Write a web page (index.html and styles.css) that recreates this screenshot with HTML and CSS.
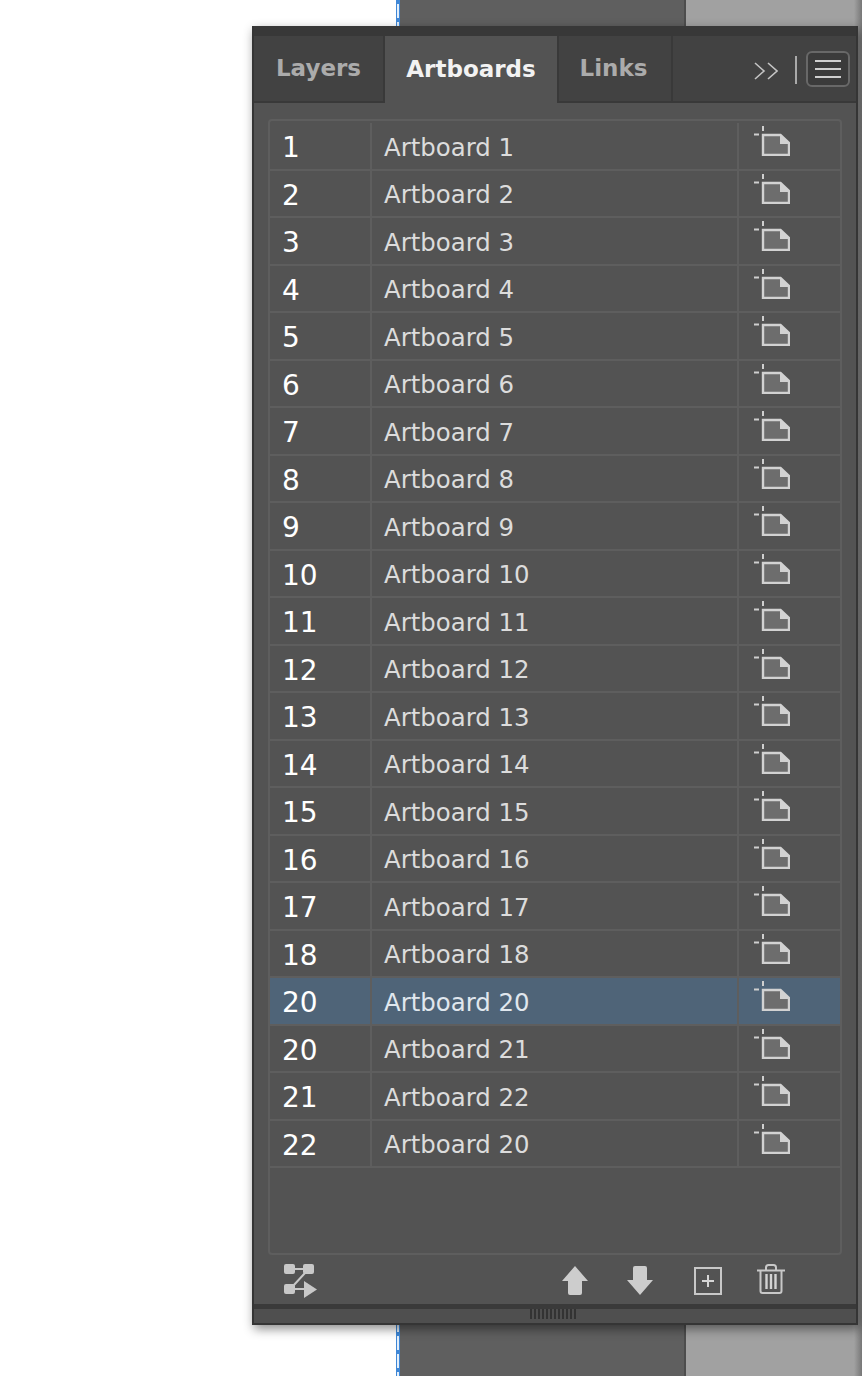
FILE: index.html
```html
<!DOCTYPE html>
<html lang="en">
<head>
  <meta charset="UTF-8" />
  <title>Artboards</title>
  <link rel="stylesheet" href="styles.css">
</head>
<body>
  <svg class="sprites" width="0" height="0">
    <!-- artboard icon used in every row -->
    <symbol id="artboard" viewBox="0 0 36 30">
      <path d="M0 8.500h5M9 0v5" fill="none" stroke="#cfcfcf" stroke-width="2"/>
      <path d="M9 9h17.500l8.500 8v12H9z" fill="#6d6d6d" stroke="#d2d2d2" stroke-width="2.400"/>
      <path d="M26 8l10 10H26z" fill="#d2d2d2"/>
    </symbol>
  </svg>

  <!-- Canvas behind the panel -->
  <div class="canvas">
    <div class="canvas-white"></div>
    <div class="canvas-guide"></div>
    <div class="canvas-dark"></div>
    <div class="canvas-light"></div>
    <div class="canvas-edge"></div>
  </div>

  <!-- Artboards panel -->
  <div class="panel">
    <div class="panel-top"></div>
    <div class="tab-bar">
      <div class="tab">Layers</div>
      <div class="tab tab-active">Artboards</div>
      <div class="tab tab-links">Links</div>
      <div class="tab-tools">
        <svg class="chevrons" width="24" height="18" viewBox="0 0 24 18">
          <path d="M1 1l9 8-9 8M14 1l9 8-9 8" fill="none" stroke="#c4c4c4" stroke-width="1.600"/>
        </svg>
        <div class="tool-sep"></div>
        <div class="menu-btn">
          <span></span><span></span><span></span>
        </div>
      </div>
    </div>

    <div class="panel-body">
      <div class="list" id="list"></div>

      <div class="footer">
        <svg class="footer-icon flow-icon" width="34" height="36" viewBox="0 0 34 36">
          <rect x="0" y="0" width="11" height="10" rx="2" fill="#c8c8c8"/>
          <rect x="19" y="0" width="11" height="10" rx="2" fill="#c8c8c8"/>
          <rect x="0" y="20" width="11" height="10" rx="2" fill="#c8c8c8"/>
          <path d="M10 5h10M21 9L9 22M10 25h11" fill="none" stroke="#c8c8c8" stroke-width="2"/>
          <path d="M20 17l13 8.500-13 8.500z" fill="#c8c8c8"/>
        </svg>
        <svg class="footer-icon up-icon" width="26" height="29" viewBox="0 0 26 29">
          <path d="M13 0l13 15h-6v12a2 2 0 0 1-2 2H8a2 2 0 0 1-2-2V15H0z" fill="#cdcdcd"/>
        </svg>
        <svg class="footer-icon down-icon" width="26" height="29" viewBox="0 0 26 29">
          <path d="M13 29L0 14h6V2a2 2 0 0 1 2-2h10a2 2 0 0 1 2 2v12h6z" fill="#cdcdcd"/>
        </svg>
        <svg class="footer-icon new-icon" width="28" height="28" viewBox="0 0 28 28">
          <rect x="1" y="1" width="26" height="26" fill="none" stroke="#c8c8c8" stroke-width="2"/>
          <path d="M14 8v12M8 14h12" fill="none" stroke="#d6d6d6" stroke-width="2"/>
        </svg>
        <svg class="footer-icon trash-icon" width="28" height="30" viewBox="0 0 28 30">
          <path d="M0 6.500h28M9 6V3.500C9 2 10 1 11.500 1h5C18 1 19 2 19 3.500V6" fill="none" stroke="#c8c8c8" stroke-width="2"/>
          <path d="M3.500 7v20c0 1.200.8 2 2 2h17c1.200 0 2-.8 2-2V7" fill="none" stroke="#c8c8c8" stroke-width="2"/>
          <path d="M9.500 10v15M14 10v15M18.500 10v15" fill="none" stroke="#d2d2d2" stroke-width="2.400"/>
        </svg>
      </div>
    </div>

    <div class="panel-bottom">
      <div class="grip"></div>
    </div>
  </div>

  <script>
    const rows = [
      ['1', 'Artboard 1'], ['2', 'Artboard 2'], ['3', 'Artboard 3'],
      ['4', 'Artboard 4'], ['5', 'Artboard 5'], ['6', 'Artboard 6'],
      ['7', 'Artboard 7'], ['8', 'Artboard 8'], ['9', 'Artboard 9'],
      ['10', 'Artboard 10'], ['11', 'Artboard 11'], ['12', 'Artboard 12'],
      ['13', 'Artboard 13'], ['14', 'Artboard 14'], ['15', 'Artboard 15'],
      ['16', 'Artboard 16'], ['17', 'Artboard 17'], ['18', 'Artboard 18'],
      ['20', 'Artboard 20', true], ['20', 'Artboard 21'],
      ['21', 'Artboard 22'], ['22', 'Artboard 20']
    ];
    const list = document.getElementById('list');
    rows.forEach(([num, name, selected]) => {
      const row = document.createElement('div');
      row.className = selected ? 'row row-selected' : 'row';
      row.innerHTML =
        '<div class="cell cell-num">' + num + '</div>' +
        '<div class="cell cell-name">' + name + '</div>' +
        '<div class="cell cell-icon"><svg width="36" height="30"><use href="#artboard"/></svg></div>';
      list.appendChild(row);
    });
  </script>
</body>
</html>
```

FILE: styles.css
```css
/* Global resets */
* {
  margin: 0;
  padding: 0;
  box-sizing: border-box;
}
body {
  width: 862px;
  height: 1376px;
  overflow: hidden;
  background-color: #fff;
  font-family: 'DejaVu Sans', sans-serif;
}
.sprites {
  position: absolute;
}

/* Canvas behind the panel */
.canvas {
  display: flex;
  height: 1376px;
}
.canvas-white {
  width: 396px;
  background-color: #fff;
}
.canvas-guide {
  width: 4px;
  background: repeating-linear-gradient(to bottom, #3f87d6 0, #3f87d6 4px, #e4effa 4px, #e4effa 18px, #3f87d6 18px);
  border-left: 1px solid #3f87d6;
  border-right: 1px solid #3f87d6;
}
.canvas-dark {
  width: 284px;
  background-color: #5f5f5f;
}
.canvas-light {
  width: 170px;
  background-color: #a1a1a1;
  border-left: 2px solid #4d4d4d;
}
.canvas-edge {
  flex: 1;
  background: linear-gradient(to right, #a1a1a1, #777);
}

/* Panel floats over the canvas */
.panel {
  position: absolute;
  left: 252px;
  top: 26px;
  width: 606px;
  height: 1299px;
  background-color: #535353;
  border: 2px solid #353535;
  border-top: none;
  box-shadow: 2px 4px 10px rgba(0, 0, 0, 0.45);
  display: flex;
  flex-direction: column;
}
.panel-top {
  height: 10px;
  background-color: #383838;
}

/* Tabs */
.tab-bar {
  height: 67px;
  display: flex;
  background-color: #424242;
  border-bottom: 2px solid #393939;
}
.tab {
  width: 131px;
  padding-bottom: 2px;
  font-size: 23px;
  font-weight: bold;
  color: #ababab;
  display: flex;
  align-items: center;
  justify-content: center;
  border-right: 2px solid #393939;
}
.tab-active {
  width: 174px;
  color: #f2f2f2;
  background-color: #535353;
  height: 67px;
  border-right: 2px solid #393939;
}
.tab-links {
  width: 114px;
  padding-right: 3px;
}
.tab-tools {
  flex: 1;
  display: flex;
  align-items: center;
  padding-left: 81px;
}
.chevrons {
  margin-top: 5px;
}
.tool-sep {
  width: 2px;
  height: 28px;
  margin-left: 17px;
  margin-top: 3px;
  background-color: #a9a9a9;
}
.menu-btn {
  width: 44px;
  height: 36px;
  margin-left: 9px;
  border: 2px solid #686868;
  border-radius: 6px;
  background-color: #3b3b3b;
  display: flex;
  flex-direction: column;
  align-items: center;
  justify-content: center;
  gap: 6px;
}
.menu-btn span {
  width: 26px;
  height: 2px;
  background-color: #cfcfcf;
}

/* Artboard list */
.panel-body {
  flex: 1;
  padding: 16px 16px 0 14px;
  display: flex;
  flex-direction: column;
}
.list {
  height: 1136px;
  padding-top: 2px;
  margin-right: -2px;
  border: 2px solid #5e5e5e;
  border-radius: 4px;
}
.row {
  height: 47.5px;
  display: grid;
  grid-template-columns: 102px 367px 1fr;
  border-bottom: 2px solid #5e5e5e;
}
.row-selected {
  background-color: #4f6478;
}
.cell {
  display: flex;
  align-items: center;
}
.cell-num {
  padding-left: 12px;
  padding-top: 4px;
  font-size: 28px;
  color: #fff;
  border-right: 2px solid #5e5e5e;
}
.cell-name {
  padding-left: 12px;
  padding-top: 3px;
  font-size: 24.400px;
  color: #dcdcdc;
  border-right: 2px solid #5e5e5e;
}
.row-selected .cell-name {
  color: #e0e7ee;
}
.cell-icon {
  padding-left: 15px;
  align-items: flex-start;
  padding-top: 3px;
}

/* Footer icons */
.footer {
  display: flex;
  align-items: flex-start;
  padding-top: 8px;
  padding-left: 16px;
}
.flow-icon {
  margin-top: 1px;
  margin-right: 244px;
}
.up-icon {
  margin-top: 3px;
  margin-right: 39px;
}
.down-icon {
  margin-top: 3px;
  margin-right: 41px;
}
.new-icon {
  margin-top: 4px;
  margin-right: 35px;
}
.trash-icon {
  margin-top: 1px;
}

/* Bottom resize strip */
.panel-bottom {
  height: 19px;
  background-color: #4f4f4f;
  border-top: 5px solid #3a3a3a;
  display: flex;
  justify-content: center;
}
.grip {
  width: 48px;
  height: 10px;
  margin-left: -2px;
  background: repeating-linear-gradient(to right, #333 0, #333 2px, #4f4f4f 2px, #4f4f4f 4px);
}
```
